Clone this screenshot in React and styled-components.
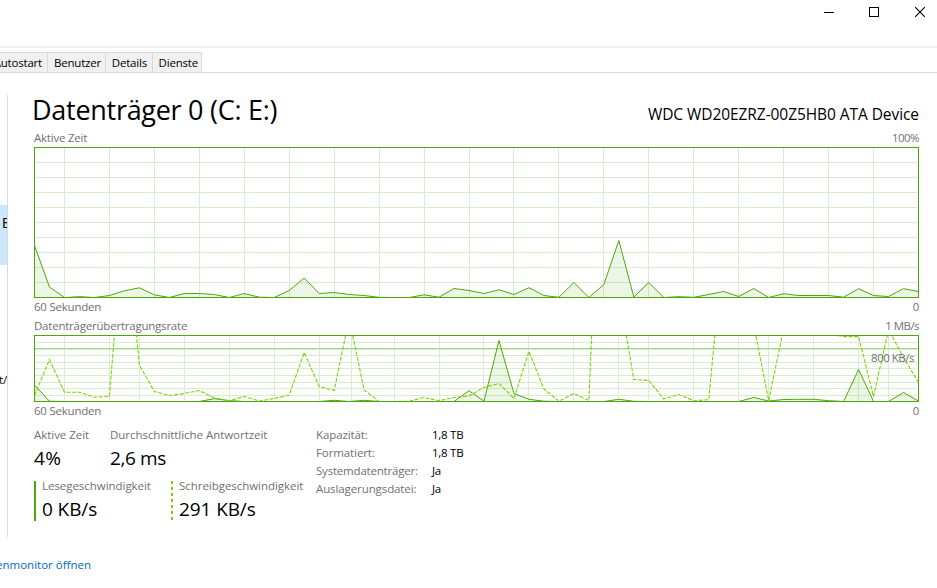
import React from 'react'
import styled, { createGlobalStyle } from 'styled-components';

const GlobalStyle = createGlobalStyle`
body {
    margin: 0;
    background: #ffffff;
    color: #000000;
    font-family: 'Open Sans', 'Noto Sans', sans-serif;
    font-size: 11.5px;
    line-height: 17px;
    overflow: hidden;
}
`

const Window = styled.div`
display: flex;
flex-direction: column;
width: 937px;
height: 588px;
overflow: hidden;
white-space: nowrap;
`

const TitleBar = styled.div`
display: flex;
justify-content: flex-end;
gap: 36px;
height: 46px;
padding: 7px 12px 0 0;
box-sizing: border-box;
flex: none;

svg {
    display: block;
    width: 10px;
    height: 10px;
}

svg:first-child {
    margin-right: -1px;
}
`

const TabRow = styled.div`
display: flex;
height: 20px;
padding-top: 4px;
border-top: 2px solid #f0f0f0;
border-bottom: 1px solid #d9d9d9;
flex: none;
`

const Tab = styled.div`
width: ${props => props.$width}px;
box-sizing: border-box;
padding-right: ${props => props.$pad}px;
display: flex;
justify-content: flex-end;
line-height: 19px;
letter-spacing: -0.2px;
background: #f0f0f0;
border-top: 1px solid #d9d9d9;
border-right: 1px solid #d9d9d9;
`

const Body = styled.div`
display: flex;
height: 464px;
flex: none;
`

const Sidebar = styled.div`
width: 7px;
margin-top: 22px;
padding-top: 110px;
height: 332px;
overflow: hidden;
border-right: 1px solid #d9d9d9;
flex: none;
`

const SelectedItem = styled.div`
height: 60px;
padding-left: 1.8px;
box-sizing: border-box;
background: #cce8ff;
font-size: 15px;
line-height: 34px;
`

const SideText = styled.div`
margin: 106px 0 0 -1px;
`

const Main = styled.div`
width: 885px;
margin-left: 26px;
padding-top: 18px;
`

const Header = styled.div`
display: flex;
justify-content: space-between;
align-items: baseline;
height: 38px;
`

const Title = styled.div`
margin-left: -2px;
font-size: 27px;
line-height: 37px;
letter-spacing: -0.28px;
`

const Device = styled.div`
font-size: 15.5px;
letter-spacing: -0.07px;
`

const Caption = styled.div`
display: flex;
justify-content: space-between;
height: ${props => props.$height}px;
color: #707070;
letter-spacing: -0.22px;
`

const Scale = styled.span`
letter-spacing: -0.55px;
`

const ChartBox = styled.div`
position: relative;
height: ${props => props.$height}px;

svg {
    display: block;
}
`

const Marker = styled.div`
position: absolute;
top: 14px;
right: 5px;
color: #707070;
letter-spacing: -0.5px;
`

const Stats = styled.div`
display: flex;
`

const Metrics = styled.div`
width: 282px;
`

const MetricRow = styled.div`
display: flex;
height: 51px;
`

const Metric = styled.div`
display: flex;
gap: 6px;
width: ${props => props.$width}px;
`

const Bar = styled.div`
width: 2px;
height: 40px;
margin-top: 4px;
background: ${props => props.$dashed
    ? 'repeating-linear-gradient(#7cd30c 0 3px, transparent 3px 6px)'
    : '#4da60c'};
`

const Label = styled.div`
color: #707070;
letter-spacing: -0.04px;
`

const Value = styled.div`
margin-top: 2px;
font-size: 19px;
line-height: 26px;
letter-spacing: ${props => props.$spacing || -0.1}px;
`

const Facts = styled.div`
display: grid;
grid-template-columns: 116px auto;
grid-auto-rows: 18px;
align-content: start;
`

const FactName = styled.div`
color: #707070;
letter-spacing: ${props => props.$tight ? -0.2 : -0.1}px;
`

const FactValue = styled.div`
letter-spacing: -0.25px;
`

const Footer = styled.div`
display: flex;
justify-content: flex-end;
width: 91px;
margin-top: 19px;
color: #0066cc;
`

const WIDTH = 885
const STEP = 884 / 59

const active = [
    52, 10.5, 0, 0.8, 0, 2, 6.7, 9.7, 2.7, 0, 4, 4, 3, 0, 4, 0.3, 0, 7, 19.5, 4,
    5, 3, 2, 0.2, 0, 0, 2.7, 0.3, 9, 7, 4, 7.7, 3, 9.8, 2, 0.2, 15, 0, 13, 57,
    0.5, 15, 0, 0.8, 0.2, 3, 6, 1, 9, 0, 3.8, 2, 2, 2, 0.3, 8.8, 2, 1, 8.8, 6,
]

const read = [
    16.5, 0.3, 0, 0, 0, 0, 0, 0, 0, 0, 0, 0, 2.8, 0.9, 0, 0, 0, 0, 0, 0,
    1.2, 0, 1.2, 0, 0, 0, 0, 0, 0, 10.8, 0.3, 61, 8, 2.2, 0.3, 0, 0, 0, 0, 2.2,
    0.2, 0, 0, 0, 0, 0, 0, 0, 4, 0.5, 2, 2.2, 2.2, 0.8, 0, 32, 0, 0, 9, 0.5,
]

const write = [
    6, 42, 9.3, 9.3, 4.3, 5, 190, 36.5, 10, 6, 8, 11, 3.5, 0.8, 5, 0.5, 3, 6.5, 49, 15,
    11, 83, 11.5, 0, 0, 0.3, 4, 0.8, 4, 5.5, 14, 18, 3, 50, 12.5, 0.3, 8, 1, 350, 110,
    22, 21, 2.5, 7, 0.8, 1.8, 160, 250, 77, 0.8, 73, 120, 90, 68, 64.9, 64.9, 5, 72, 44, 19,
]

// x positions of the vertical grid lines, one entry per sample index
const activeGrid = [2, 5, 8, 11, 14, 17, 20, 23, 26, 29, 32, 35, 38, 41, 44, 47, 50, 53, 56]
const rateGridX = [30, 75, 105, 150, 195, 240, 285, 317, 360, 405, 449, 494, 539, 584, 614, 659, 704, 734, 779, 824, 854]
const rateGridY = [7, 14, 20, 27, 33, 40, 47, 53, 60]

const toPoints = (values, height) =>
    values.map((v, i) => `${(i * STEP + 0.5).toFixed(2)},${(height - 0.5 - v).toFixed(2)}`).join(' ')

function Graph({ height, gridX, gridY, solid, dashed, limit }) {
    const line = toPoints(solid, height)
    return (
        <svg width={WIDTH} height={height} viewBox={`0 0 ${WIDTH} ${height}`}>
            <g fill="#d9ecce">
                {gridX.map(x => <rect key={x} x={x} y="0" width="1" height={height} />)}
                {gridY.map(y => <rect key={y} x="0" y={y} width={WIDTH - 2} height="1" />)}
            </g>
            {limit && <rect x="0" y={limit} width={WIDTH} height="1" fill="#a3d585" />}
            <polygon points={`0.5,${height} ${line} ${WIDTH - 0.5},${height}`} fill="#4da60c" fillOpacity="0.1" />
            <polyline points={line} fill="none" stroke="#4da60c" strokeWidth="1" />
            {dashed && (
                <polyline
                    points={toPoints(dashed, height)}
                    fill="none"
                    stroke="#7cd30c"
                    strokeWidth="1.1"
                    strokeDasharray="4 1.5"
                />
            )}
            <rect x="0.5" y="0.5" width={WIDTH - 1} height={height - 1} fill="none" stroke="#4da60c" />
        </svg>
    )
}

export default function App() {
    return (
        <Window>
            <GlobalStyle />
            <TitleBar>
                <svg><path d="M0 5.5h10" stroke="#000" /></svg>
                <svg><rect x="0.5" y="0.5" width="9" height="9" fill="none" stroke="#000" /></svg>
                <svg><path d="M0 0l10 10M10 0L0 10" stroke="#000" strokeWidth="1.1" /></svg>
            </TitleBar>
            <TabRow>
                <Tab $width={48} $pad={5}>Autostart</Tab>
                <Tab $width={58} $pad={4}>Benutzer</Tab>
                <Tab $width={47} $pad={5}>Details</Tab>
                <Tab $width={49} $pad={3}>Dienste</Tab>
            </TabRow>
            <Body>
                <Sidebar>
                    <SelectedItem>E</SelectedItem>
                    <SideText>t/</SideText>
                </Sidebar>
                <Main>
                    <Header>
                        <Title>Datenträger 0 (C: E:)</Title>
                        <Device>WDC WD20EZRZ-00Z5HB0 ATA Device</Device>
                    </Header>
                    <Caption $height={18}>
                        <span>Aktive Zeit</span>
                        <Scale>100%</Scale>
                    </Caption>
                    <ChartBox $height={151}>
                        <Graph
                            height={151}
                            gridX={activeGrid.map(i => Math.round(i * STEP))}
                            gridY={[15, 30, 45, 60, 75, 90, 105, 120, 135]}
                            solid={active}
                        />
                    </ChartBox>
                    <Caption $height={19}>
                        <span>60 Sekunden</span>
                        <span>0</span>
                    </Caption>
                    <Caption $height={18}>
                        <span>Datenträgerübertragungsrate</span>
                        <Scale>1 MB/s</Scale>
                    </Caption>
                    <ChartBox $height={67}>
                        <Graph
                            height={67}
                            gridX={rateGridX}
                            gridY={rateGridY}
                            solid={read}
                            dashed={write}
                            limit={13}
                        />
                        <Marker>800 KB/s</Marker>
                    </ChartBox>
                    <Caption $height={24}>
                        <span>60 Sekunden</span>
                        <span>0</span>
                    </Caption>
                    <Stats>
                        <Metrics>
                            <MetricRow>
                                <Metric $width={76}>
                                    <div>
                                        <Label>Aktive Zeit</Label>
                                        <Value $spacing={0.3}>4%</Value>
                                    </div>
                                </Metric>
                                <Metric>
                                    <div>
                                        <Label>Durchschnittliche Antwortzeit</Label>
                                        <Value $spacing={-0.4}>2,6 ms</Value>
                                    </div>
                                </Metric>
                            </MetricRow>
                            <MetricRow>
                                <Metric $width={137}>
                                    <Bar />
                                    <div>
                                        <Label>Lesegeschwindigkeit</Label>
                                        <Value>0 KB/s</Value>
                                    </div>
                                </Metric>
                                <Metric>
                                    <Bar $dashed />
                                    <div>
                                        <Label>Schreibgeschwindigkeit</Label>
                                        <Value>291 KB/s</Value>
                                    </div>
                                </Metric>
                            </MetricRow>
                        </Metrics>
                        <Facts>
                            <FactName>Kapazität:</FactName>
                            <FactValue>1,8 TB</FactValue>
                            <FactName>Formatiert:</FactName>
                            <FactValue>1,8 TB</FactValue>
                            <FactName $tight>Systemdatenträger:</FactName>
                            <FactValue>Ja</FactValue>
                            <FactName>Auslagerungsdatei:</FactName>
                            <FactValue>Ja</FactValue>
                        </Facts>
                    </Stats>
                </Main>
            </Body>
            <Footer>enmonitor öffnen</Footer>
        </Window>
    );
}
